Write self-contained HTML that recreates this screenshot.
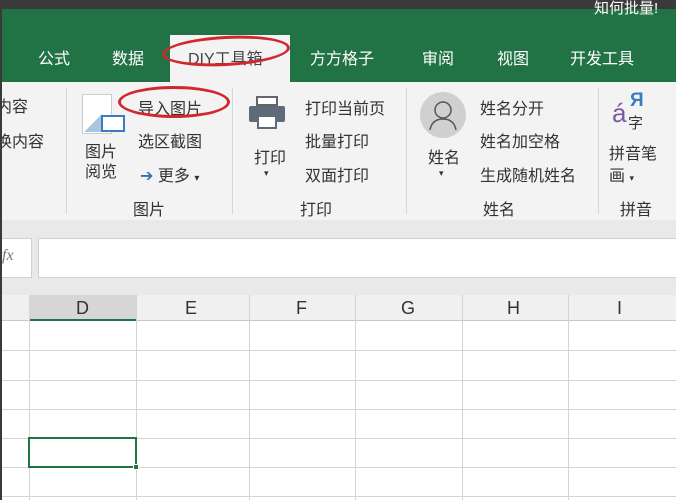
<!DOCTYPE html><html><head><meta charset="utf-8"><style>
*{margin:0;padding:0;box-sizing:border-box}
body{width:676px;height:500px;overflow:hidden;background:#fff;font-family:"Liberation Sans","Noto Sans CJK SC",sans-serif;position:relative;color:#333}
.a{position:absolute;white-space:nowrap}
.tab{top:45px;color:#fff;font-size:16px}
.r{font-size:16px;color:#333}
.hl{position:absolute;background:#d4d4d4;width:1px}
.vl{position:absolute;background:#d4d4d4;height:1px;left:0;width:676px}
.ch{top:298px;font-size:18px;color:#333}
</style></head><body>
<div class="a" style="left:0;top:0;width:676px;height:9px;background:#3a3a3a"></div>
<div class="a" style="left:0;top:9px;width:676px;height:73px;background:#217346"></div>
<div class="a" style="left:594px;top:-3px;color:#fff;font-size:15px">知何批量!</div>
<div class="a" style="left:170px;top:35px;width:120px;height:48px;background:#f3f3f3"></div>
<div class="a tab" style="left:38px">公式</div>
<div class="a tab" style="left:112px">数据</div>
<div class="a tab" style="left:188px;color:#444">DIY工具箱</div>
<div class="a tab" style="left:310px">方方格子</div>
<div class="a tab" style="left:422px">审阅</div>
<div class="a tab" style="left:497px">视图</div>
<div class="a tab" style="left:570px">开发工具</div>
<div class="a" style="left:0;top:82px;width:676px;height:138px;background:#f3f3f3"></div>
<div class="a" style="left:66px;top:88px;width:1px;height:126px;background:#d6d6d6"></div>
<div class="a" style="left:232px;top:88px;width:1px;height:126px;background:#d6d6d6"></div>
<div class="a" style="left:406px;top:88px;width:1px;height:126px;background:#d6d6d6"></div>
<div class="a" style="left:598px;top:88px;width:1px;height:126px;background:#d6d6d6"></div>
<div class="a r" style="left:-4px;top:93px">内容</div>
<div class="a r" style="left:-4px;top:128px">换内容</div>
<div class="a" style="left:82px;top:94px;width:30px;height:40px;background:#fff;border:1px solid #ccc"></div>
<div class="a" style="left:84px;top:114px;width:0;height:0;border-left:18px solid transparent;border-bottom:18px solid #a9c6e0"></div>
<div class="a" style="left:101px;top:115px;width:24px;height:17px;border:2px solid #3b7bbf;background:#fff"></div>
<div class="a r" style="left:85px;top:143px;line-height:20px">图片<br>阅览</div>
<div class="a r" style="left:138px;top:95px">导入图片</div>
<div class="a r" style="left:138px;top:128px">选区截图</div>
<div class="a r" style="left:140px;top:162px"><span style="color:#2e6fbf">➔</span> 更多 <span style="font-size:10px">▾</span></div>
<div class="a r" style="left:133px;top:196px">图片</div>
<div class="a" style="left:256px;top:96px;width:22px;height:10px;border:2px solid #666;background:#fff"></div>
<div class="a" style="left:249px;top:106px;width:36px;height:16px;background:#5f6b78;border-radius:2px"></div>
<div class="a" style="left:257px;top:115px;width:20px;height:14px;background:#fff;border:2px solid #5f6b78"></div>
<div class="a r" style="left:254px;top:144px">打印</div>
<div class="a" style="left:264px;top:168px;font-size:9px">▾</div>
<div class="a r" style="left:305px;top:95px">打印当前页</div>
<div class="a r" style="left:305px;top:128px">批量打印</div>
<div class="a r" style="left:305px;top:162px">双面打印</div>
<div class="a r" style="left:300px;top:196px">打印</div>
<div class="a" style="left:420px;top:92px;width:46px;height:46px;border-radius:50%;background:#d0d0d0"></div>
<svg class="a" style="left:420px;top:92px" width="46" height="46"><circle cx="23" cy="18" r="8" fill="none" stroke="#555" stroke-width="1.5"/><path d="M10 38 Q12 27 23 27 Q34 27 36 38" fill="none" stroke="#555" stroke-width="1.5"/></svg>
<div class="a r" style="left:428px;top:144px">姓名</div>
<div class="a" style="left:439px;top:168px;font-size:9px">▾</div>
<div class="a r" style="left:480px;top:95px">姓名分开</div>
<div class="a r" style="left:480px;top:128px">姓名加空格</div>
<div class="a r" style="left:480px;top:162px">生成随机姓名</div>
<div class="a r" style="left:483px;top:196px">姓名</div>
<div class="a" style="left:612px;top:98px;font-size:26px;color:#7a5aa6">á</div>
<div class="a" style="left:630px;top:90px;font-size:19px;font-weight:bold;color:#3b7bbf">Я</div>
<div class="a" style="left:628px;top:112px;font-size:15px">字</div>
<div class="a r" style="left:609px;top:144px;line-height:22px">拼音笔<br>画 <span style="font-size:9px">▾</span></div>
<div class="a r" style="left:620px;top:196px">拼音</div>
<div class="a" style="left:0;top:220px;width:676px;height:75px;background:#e9e9e9"></div>
<div class="a" style="left:0;top:238px;width:32px;height:40px;background:#fff;border:1px solid #d0d0d0;border-left:none"></div>
<div class="a" style="left:2px;top:247px;font-style:italic;font-family:'Liberation Serif',serif;color:#777;font-size:16px">fx</div>
<div class="a" style="left:38px;top:238px;width:640px;height:40px;background:#fff;border:1px solid #d0d0d0"></div>
<div class="a" style="left:0;top:295px;width:676px;height:26px;background:#f0f0f0;border-bottom:1px solid #c8c8c8"></div>
<div class="a" style="left:29px;top:295px;width:107px;height:26px;background:#d6d6d6;border-bottom:2px solid #217346"></div>
<div class="a ch" style="left:76px">D</div>
<div class="a ch" style="left:185px">E</div>
<div class="a ch" style="left:296px">F</div>
<div class="a ch" style="left:401px">G</div>
<div class="a ch" style="left:507px">H</div>
<div class="a ch" style="left:617px">I</div>
<div class="hl" style="left:29px;top:295px;height:205px"></div>
<div class="hl" style="left:136px;top:295px;height:205px"></div>
<div class="hl" style="left:249px;top:295px;height:205px"></div>
<div class="hl" style="left:355px;top:295px;height:205px"></div>
<div class="hl" style="left:462px;top:295px;height:205px"></div>
<div class="hl" style="left:568px;top:295px;height:205px"></div>
<div class="vl" style="top:350px"></div>
<div class="vl" style="top:380px"></div>
<div class="vl" style="top:409px"></div>
<div class="vl" style="top:438px"></div>
<div class="vl" style="top:467px"></div>
<div class="vl" style="top:496px"></div>
<div class="a" style="left:28px;top:437px;width:109px;height:31px;border:2px solid #217346"></div>
<div class="a" style="left:133px;top:464px;width:6px;height:6px;background:#217346;border:1px solid #fff"></div>
<div class="a" style="left:0;top:0;width:2px;height:500px;background:#3a3a3a"></div>
<div class="a" style="left:162px;top:36px;width:128px;height:30px;border:3px solid #d0282e;border-radius:50%;transform:rotate(-3deg)"></div>
<div class="a" style="left:118px;top:86px;width:112px;height:32px;border:3px solid #d0282e;border-radius:50%"></div>
</body></html>
